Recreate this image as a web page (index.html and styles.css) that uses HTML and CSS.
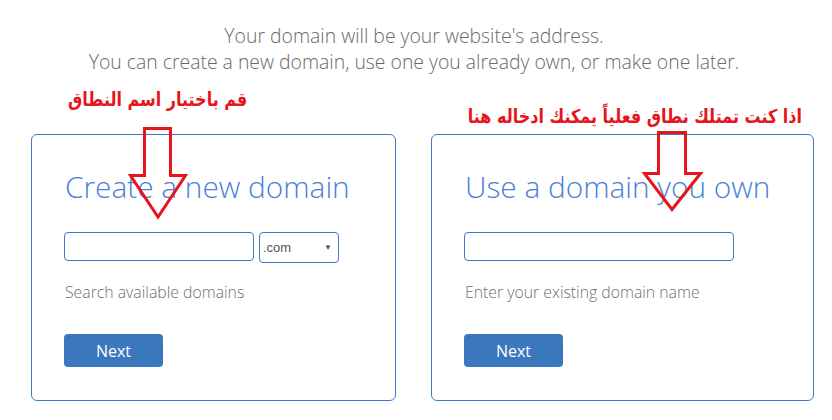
FILE: index.html
```html
<!DOCTYPE html>
<html lang="en">
<head>
<meta charset="utf-8">
<title>Domain</title>
<link rel="stylesheet" href="styles.css">
</head>
<body>
<div class="page">
  <div class="intro">
    <p>Your domain will be your website's address.</p>
    <p>You can create a new domain, use one you already own, or make one later.</p>
  </div>

  <div class="note note-left" dir="rtl">قم باختيار اسم النطاق</div>
  <div class="note note-right" dir="rtl">اذا كنت تمتلك نطاق فعلياً يمكنك ادخاله هنا</div>

  <div class="cards">
    <div class="card card-new">
      <h2 class="card-title">Create a new domain</h2>
      <div class="field-row">
        <div class="text-input input-new"></div>
        <div class="tld-select"><span>.com</span><span class="caret">&#9660;</span></div>
      </div>
      <p class="hint">Search available domains</p>
      <button class="btn">Next</button>
    </div>
    <div class="card card-own">
      <h2 class="card-title">Use a domain you own</h2>
      <div class="field-row">
        <div class="text-input input-own"></div>
      </div>
      <p class="hint">Enter your existing domain name</p>
      <button class="btn">Next</button>
    </div>
  </div>

  <svg class="arrows" width="832" height="420" viewBox="0 0 832 420">
    <polygon points="144.5,128.5 170.5,128.5 170.5,175.5 185.5,175.5 158,217 130.5,175.5 144.5,175.5" />
    <polygon points="658.5,132.5 685.5,132.5 685.5,173.5 700.5,173.5 672,209.5 644.5,173.5 658.5,173.5" />
  </svg>
</div>
</body>
</html>
```

FILE: styles.css
```css
* { box-sizing: border-box; }

html, body {
  margin: 0;
  padding: 0;
  background: #ffffff;
}

.page {
  position: relative;
  width: 832px;
  height: 420px;
  overflow: hidden;
  font-family: "Open Sans", "Liberation Sans", sans-serif;
}

.intro {
  padding: 23px 4px 0 0;
  text-align: center;
  color: #6a6a6a;
  font-size: 19.4px;
  font-weight: 300;
  line-height: 26px;
}

.intro p {
  margin: 0;
}

.note {
  position: absolute;
  color: #e8141c;
  font-family: "DejaVu Sans", sans-serif;
  font-weight: bold;
  font-size: 16px;
  line-height: 24px;
  white-space: nowrap;
  transform: scaleY(1.2);
}

.note-left {
  left: 68px;
  top: 88px;
}

.note-right {
  right: 30px;
  top: 105px;
}

.cards {
  display: grid;
  grid-template-columns: 365px 383px;
  column-gap: 35px;
  padding-left: 31px;
  margin-top: 59px;
}

.card {
  height: 267px;
  border: 1px solid #3f78c8;
  border-radius: 6px;
  padding: 34px 0 0 32px;
}

.card-title {
  margin: 0 0 27px 1px;
  font-size: 29.8px;
  font-weight: 300;
  line-height: 36px;
  color: #4a80d8;
  white-space: nowrap;
}

.field-row {
  display: flex;
  align-items: flex-start;
  gap: 5px;
  height: 31px;
}

.text-input {
  height: 29px;
  border: 1px solid #3f78c8;
  border-radius: 4px;
  background: #fff;
}

.input-new { width: 190px; }
.input-own { width: 270px; }

.tld-select {
  width: 80px;
  height: 31px;
  border: 1px solid #3f78c8;
  border-radius: 4px;
  display: flex;
  align-items: center;
  justify-content: space-between;
  padding: 0 6px 0 3px;
  font-family: "Liberation Sans", Arial, sans-serif;
  font-size: 13px;
  color: #555;
}

.caret {
  font-size: 8px;
  color: #555;
}

.hint {
  margin: 18px 0 0 1px;
  font-size: 15.8px;
  font-weight: 300;
  line-height: 22px;
  color: #6f6f6f;
}

.btn {
  display: block;
  margin-top: 31px;
  width: 99px;
  height: 33px;
  border: none;
  border-radius: 4px;
  background: #3a77bc;
  color: #ffffff;
  font-family: "Open Sans", sans-serif;
  font-size: 16px;
  font-weight: 400;
  padding: 0;
}

.arrows {
  position: absolute;
  left: 0;
  top: 0;
  pointer-events: none;
}

.arrows polygon {
  fill: none;
  stroke: #e8141c;
  stroke-width: 3;
  stroke-linejoin: miter;
}
```
